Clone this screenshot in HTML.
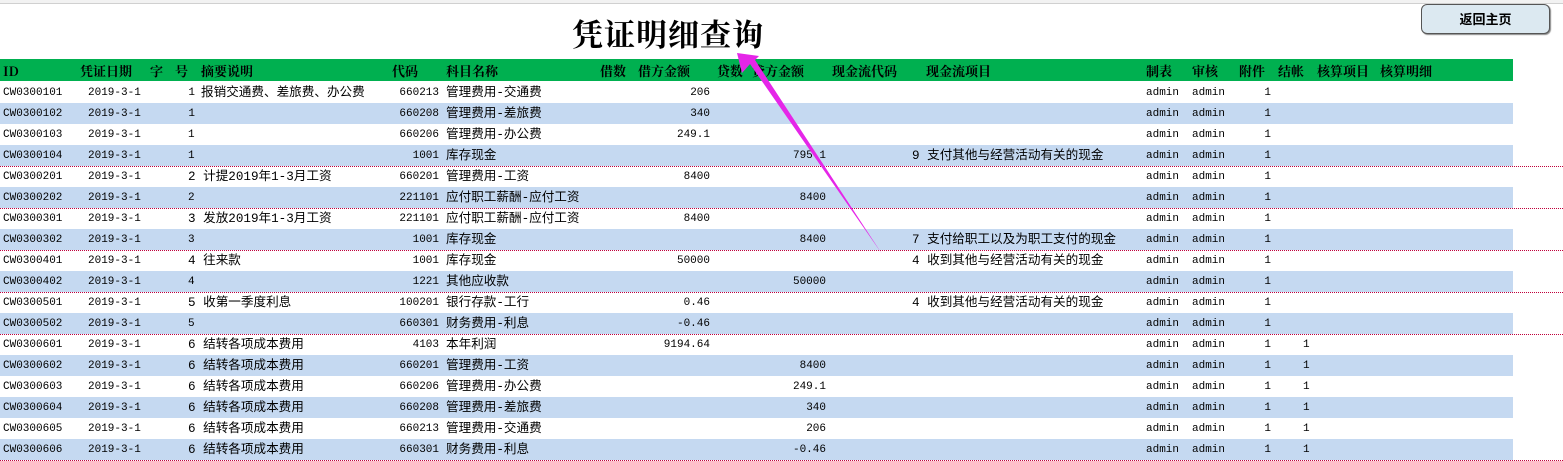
<!DOCTYPE html>
<html><head><meta charset="utf-8"><style>
body{margin:0;width:1563px;height:461px;overflow:hidden;background:#fff;position:relative;font-family:"Liberation Mono","Noto Sans CJK SC",monospace;font-size:11px;color:#000}
.top{position:absolute;left:0;top:0;width:1563px;height:3px;background:#f2f2f2;border-bottom:1px solid #d0d0d0}
.title{position:absolute;left:572px;top:13px;font-family:"Noto Serif CJK SC",serif;font-weight:bold;font-size:31px;line-height:40px;letter-spacing:1px}
.btn{position:absolute;left:1421px;top:4px;width:127px;height:28px;background:#dce9f1;border:1px solid #555;border-radius:6px;box-shadow:1px 1px 1px #888;font-family:"Noto Sans CJK SC",sans-serif;font-weight:bold;font-size:13px;text-align:center;line-height:27px}
.hd{position:absolute;left:0;top:59px;width:1513px;height:22px;background:#00b050;font-family:"Noto Serif CJK SC",serif;font-weight:bold;font-size:13px;line-height:24px}
.r{position:absolute;left:0;width:1513px;height:21px;line-height:22px}
.b{background:#c5d9f1}
.d:after{content:"";position:absolute;left:0;bottom:-1px;width:1563px;border-bottom:1px dotted #c0003c}
span{position:absolute;white-space:nowrap}
.c{font-size:12.6px}
</style></head><body>
<div class="top"></div>
<div class="title">凭证明细查询</div>
<div class="btn">返回主页</div>
<div class="hd">
<span style="left:3px">ID</span><span style="left:80px">凭证日期</span><span style="left:150px">字</span><span style="left:175px">号</span><span style="left:201px">摘要说明</span><span style="left:392px">代码</span><span style="left:446px">科目名称</span><span style="left:600px">借数</span><span style="left:638px">借方金额</span><span style="left:717px">贷数</span><span style="left:752px">贷方金额</span><span style="left:832px">现金流代码</span><span style="left:926px">现金流项目</span><span style="left:1146px">制表</span><span style="left:1192px">审核</span><span style="left:1239px">附件</span><span style="left:1278px">结帐</span><span style="left:1317px">核算项目</span><span style="left:1380px">核算明细</span>
</div>

<div class="r" style="top:82px"><span style="left:3px">CW0300101</span><span style="left:88px">2019-3-1</span><span style="right:1318px">1</span><span class="c" style="left:201px">报销交通费、差旅费、办公费</span><span style="right:1074px">660213</span><span class="c" style="left:446px">管理费用-交通费</span><span style="right:803px">206</span><span style="left:1146px">admin</span><span style="left:1192px">admin</span><span style="right:242px">1</span></div>
<div class="r b" style="top:103px"><span style="left:3px">CW0300102</span><span style="left:88px">2019-3-1</span><span style="right:1318px">1</span><span style="right:1074px">660208</span><span class="c" style="left:446px">管理费用-差旅费</span><span style="right:803px">340</span><span style="left:1146px">admin</span><span style="left:1192px">admin</span><span style="right:242px">1</span></div>
<div class="r" style="top:124px"><span style="left:3px">CW0300103</span><span style="left:88px">2019-3-1</span><span style="left:188px">1</span><span style="right:1074px">660206</span><span class="c" style="left:446px">管理费用-办公费</span><span style="right:803px">249.1</span><span style="left:1146px">admin</span><span style="left:1192px">admin</span><span style="right:242px">1</span></div>
<div class="r b d" style="top:145px"><span style="left:3px">CW0300104</span><span style="left:88px">2019-3-1</span><span style="left:188px">1</span><span style="right:1074px">1001</span><span class="c" style="left:446px">库存现金</span><span style="right:687px">795.1</span><span class="c" style="left:912px">9 支付其他与经营活动有关的现金</span><span style="left:1146px">admin</span><span style="left:1192px">admin</span><span style="right:242px">1</span></div>
<div class="r" style="top:166px"><span style="left:3px">CW0300201</span><span style="left:88px">2019-3-1</span><span class="c" style="left:188px">2 计提2019年1-3月工资</span><span style="right:1074px">660201</span><span class="c" style="left:446px">管理费用-工资</span><span style="right:803px">8400</span><span style="left:1146px">admin</span><span style="left:1192px">admin</span><span style="right:242px">1</span></div>
<div class="r b d" style="top:187px"><span style="left:3px">CW0300202</span><span style="left:88px">2019-3-1</span><span style="left:188px">2</span><span style="right:1074px">221101</span><span class="c" style="left:446px">应付职工薪酬-应付工资</span><span style="right:687px">8400</span><span style="left:1146px">admin</span><span style="left:1192px">admin</span><span style="right:242px">1</span></div>
<div class="r" style="top:208px"><span style="left:3px">CW0300301</span><span style="left:88px">2019-3-1</span><span class="c" style="left:188px">3 发放2019年1-3月工资</span><span style="right:1074px">221101</span><span class="c" style="left:446px">应付职工薪酬-应付工资</span><span style="right:803px">8400</span><span style="left:1146px">admin</span><span style="left:1192px">admin</span><span style="right:242px">1</span></div>
<div class="r b d" style="top:229px"><span style="left:3px">CW0300302</span><span style="left:88px">2019-3-1</span><span style="left:188px">3</span><span style="right:1074px">1001</span><span class="c" style="left:446px">库存现金</span><span style="right:687px">8400</span><span class="c" style="left:912px">7 支付给职工以及为职工支付的现金</span><span style="left:1146px">admin</span><span style="left:1192px">admin</span><span style="right:242px">1</span></div>
<div class="r" style="top:250px"><span style="left:3px">CW0300401</span><span style="left:88px">2019-3-1</span><span class="c" style="left:188px">4 往来款</span><span style="right:1074px">1001</span><span class="c" style="left:446px">库存现金</span><span style="right:803px">50000</span><span class="c" style="left:912px">4 收到其他与经营活动有关的现金</span><span style="left:1146px">admin</span><span style="left:1192px">admin</span><span style="right:242px">1</span></div>
<div class="r b d" style="top:271px"><span style="left:3px">CW0300402</span><span style="left:88px">2019-3-1</span><span style="left:188px">4</span><span style="right:1074px">1221</span><span class="c" style="left:446px">其他应收款</span><span style="right:687px">50000</span><span style="left:1146px">admin</span><span style="left:1192px">admin</span><span style="right:242px">1</span></div>
<div class="r" style="top:292px"><span style="left:3px">CW0300501</span><span style="left:88px">2019-3-1</span><span class="c" style="left:188px">5 收第一季度利息</span><span style="right:1074px">100201</span><span class="c" style="left:446px">银行存款-工行</span><span style="right:803px">0.46</span><span class="c" style="left:912px">4 收到其他与经营活动有关的现金</span><span style="left:1146px">admin</span><span style="left:1192px">admin</span><span style="right:242px">1</span></div>
<div class="r b d" style="top:313px"><span style="left:3px">CW0300502</span><span style="left:88px">2019-3-1</span><span style="left:188px">5</span><span style="right:1074px">660301</span><span class="c" style="left:446px">财务费用-利息</span><span style="right:803px">-0.46</span><span style="left:1146px">admin</span><span style="left:1192px">admin</span><span style="right:242px">1</span></div>
<div class="r" style="top:334px"><span style="left:3px">CW0300601</span><span style="left:88px">2019-3-1</span><span class="c" style="left:188px">6 结转各项成本费用</span><span style="right:1074px">4103</span><span class="c" style="left:446px">本年利润</span><span style="right:803px">9194.64</span><span style="left:1146px">admin</span><span style="left:1192px">admin</span><span style="right:242px">1</span><span style="left:1303px">1</span></div>
<div class="r b" style="top:355px"><span style="left:3px">CW0300602</span><span style="left:88px">2019-3-1</span><span class="c" style="left:188px">6 结转各项成本费用</span><span style="right:1074px">660201</span><span class="c" style="left:446px">管理费用-工资</span><span style="right:687px">8400</span><span style="left:1146px">admin</span><span style="left:1192px">admin</span><span style="right:242px">1</span><span style="left:1303px">1</span></div>
<div class="r" style="top:376px"><span style="left:3px">CW0300603</span><span style="left:88px">2019-3-1</span><span class="c" style="left:188px">6 结转各项成本费用</span><span style="right:1074px">660206</span><span class="c" style="left:446px">管理费用-办公费</span><span style="right:687px">249.1</span><span style="left:1146px">admin</span><span style="left:1192px">admin</span><span style="right:242px">1</span><span style="left:1303px">1</span></div>
<div class="r b" style="top:397px"><span style="left:3px">CW0300604</span><span style="left:88px">2019-3-1</span><span class="c" style="left:188px">6 结转各项成本费用</span><span style="right:1074px">660208</span><span class="c" style="left:446px">管理费用-差旅费</span><span style="right:687px">340</span><span style="left:1146px">admin</span><span style="left:1192px">admin</span><span style="right:242px">1</span><span style="left:1303px">1</span></div>
<div class="r" style="top:418px"><span style="left:3px">CW0300605</span><span style="left:88px">2019-3-1</span><span class="c" style="left:188px">6 结转各项成本费用</span><span style="right:1074px">660213</span><span class="c" style="left:446px">管理费用-交通费</span><span style="right:687px">206</span><span style="left:1146px">admin</span><span style="left:1192px">admin</span><span style="right:242px">1</span><span style="left:1303px">1</span></div>
<div class="r b d" style="top:439px"><span style="left:3px">CW0300606</span><span style="left:88px">2019-3-1</span><span class="c" style="left:188px">6 结转各项成本费用</span><span style="right:1074px">660301</span><span class="c" style="left:446px">财务费用-利息</span><span style="right:687px">-0.46</span><span style="left:1146px">admin</span><span style="left:1192px">admin</span><span style="right:242px">1</span><span style="left:1303px">1</span></div>

<svg style="position:absolute;left:0;top:0" width="1563" height="461"><polygon points="737,53 742,73 750,64 882,254 755,60 759,56" fill="#e526e8"/></svg>
</body></html>
